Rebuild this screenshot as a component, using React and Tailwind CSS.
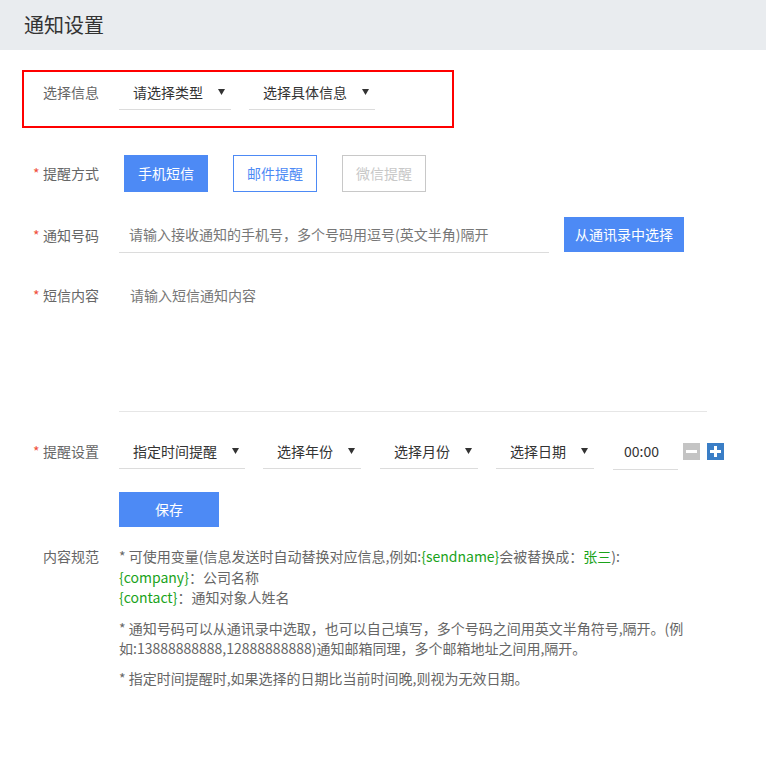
import React from "react";

const font = { fontFamily: '"Noto Sans CJK SC", "Noto Sans", sans-serif' };

const Arrow = () => (
  <svg width="7" height="6" viewBox="0 0 7 6" className="absolute right-[6px] top-1/2 -translate-y-1/2">
    <path d="M0 0 H7 L3.5 6 Z" fill="#333" />
  </svg>
);

const Select = ({ text, className }) => (
  <div className={`relative h-[35px] border-b border-[#dcdcdc] flex items-center pl-[14px] text-[14px] text-[#333] shrink-0 ${className}`}>
    {text}
    <Arrow />
  </div>
);

const Label = ({ text, star = true }) => (
  <div className="w-[119px] shrink-0 pl-[33px] flex items-center text-[14px] text-[#666]">
    <span className="w-[10px] text-[#f0503c]">{star ? "*" : ""}</span>
    {text}
  </div>
);

export default function App() {
  return (
    <div className="w-[766px] min-h-[765px] bg-white" style={font}>
      {/* Header */}
      <div className="h-[50px] bg-[#e9ecef] flex items-center pl-[24px]">
        <h1 className="text-[20px] text-[#333]">通知设置</h1>
      </div>

      {/* Selected info box */}
      <div className="ml-[22px] mt-[20px] w-[432px] h-[58px] border-2 border-[#f00] flex items-start pt-[3px]">
        <div className="w-[95px] shrink-0 pl-[19px] h-[35px] flex items-center text-[14px] text-[#666]">选择信息</div>
        <Select text="请选择类型" className="w-[112px]" />
        <Select text="选择具体信息" className="w-[126px] ml-[18px]" />
      </div>

      {/* 提醒方式 */}
      <div className="flex mt-[27px] h-[37px]">
        <Label text="提醒方式" />
        <div className="flex ml-[5px] gap-[25px]">
          <button className="w-[84px] h-[37px] bg-[#4d8af5] text-white text-[14px]">手机短信</button>
          <button className="w-[84px] h-[37px] border border-[#4d8af5] text-[#4d8af5] text-[14px]">邮件提醒</button>
          <button className="w-[84px] h-[37px] border border-[#c8c8c8] text-[#c8c8c8] text-[14px]">微信提醒</button>
        </div>
      </div>

      {/* 通知号码 */}
      <div className="flex mt-[25px] h-[36px]">
        <Label text="通知号码" />
        <div className="w-[430px] h-[36px] border-b border-[#dcdcdc] flex items-center pl-[10px] text-[14px] text-[#777]">
          请输入接收通知的手机号，多个号码用逗号(英文半角)隔开
        </div>
        <button className="ml-[15px] w-[120px] h-[35px] bg-[#4d8af5] text-white text-[14px]">从通讯录中选择</button>
      </div>

      {/* 短信内容 */}
      <div className="flex mt-[24px]">
        <div className="w-[119px] shrink-0 pl-[33px] pt-[8px] text-[14px] leading-[20px] text-[#666]">
          <span className="inline-block w-[10px] text-[#f0503c]">*</span>短信内容
        </div>
        <div className="w-[588px] h-[135px] border-b border-[#e6e6e6] pt-[8px] pl-[11px] text-[14px] leading-[20px] text-[#777]">
          请输入短信通知内容
        </div>
      </div>

      {/* 提醒设置 */}
      <div className="flex mt-[22px] h-[35px]">
        <Label text="提醒设置" />
        <Select text="指定时间提醒" className="w-[126px]" />
        <Select text="选择年份" className="w-[98px] ml-[18px]" />
        <Select text="选择月份" className="w-[98px] ml-[19px]" />
        <Select text="选择日期" className="w-[98px] ml-[18px]" />
        <div className="ml-[19px] w-[65px] h-[36px] border-b border-[#dcdcdc] flex items-center pl-[11px] text-[14px] text-[#333]">
          00:00
        </div>
        <div className="ml-[5px] mt-[9px] w-[17px] h-[17px] bg-[#c4c4c4] flex items-center justify-center">
          <div className="w-[11px] h-[3px] bg-white" />
        </div>
        <div className="ml-[7px] mt-[9px] w-[17px] h-[17px] bg-[#3a7ec6] relative flex items-center justify-center">
          <div className="w-[11px] h-[3px] bg-white" />
          <div className="absolute w-[3px] h-[11px] bg-white" />
        </div>
      </div>

      {/* 保存 */}
      <div className="ml-[119px] mt-[23px]">
        <button className="w-[100px] h-[35px] bg-[#4d8af5] text-white text-[14px]">保存</button>
      </div>

      {/* 内容规范 */}
      <div className="flex mt-[19px] text-[14px] leading-[20.5px] text-[#666]">
        <div className="w-[119px] shrink-0 pl-[43px]">内容规范</div>
        <div className="whitespace-nowrap">
          <div>
            * 可使用变量(信息发送时自动替换对应信息,例如:<span className="text-[#1aa31a]">{"{sendname}"}</span>会被替换成：<span className="text-[#1aa31a]">张三</span>):
          </div>
          <div>
            <span className="text-[#1aa31a]">{"{company}"}</span>：公司名称
          </div>
          <div>
            <span className="text-[#1aa31a]">{"{contact}"}</span>：通知对象人姓名
          </div>
          <div className="mt-[10px]">* 通知号码可以从通讯录中选取，也可以自己填写，多个号码之间用英文半角符号,隔开。(例</div>
          <div>如:13888888888,12888888888)通知邮箱同理，多个邮箱地址之间用,隔开。</div>
          <div className="mt-[9px]">* 指定时间提醒时,如果选择的日期比当前时间晚,则视为无效日期。</div>
        </div>
      </div>
    </div>
  );
}
